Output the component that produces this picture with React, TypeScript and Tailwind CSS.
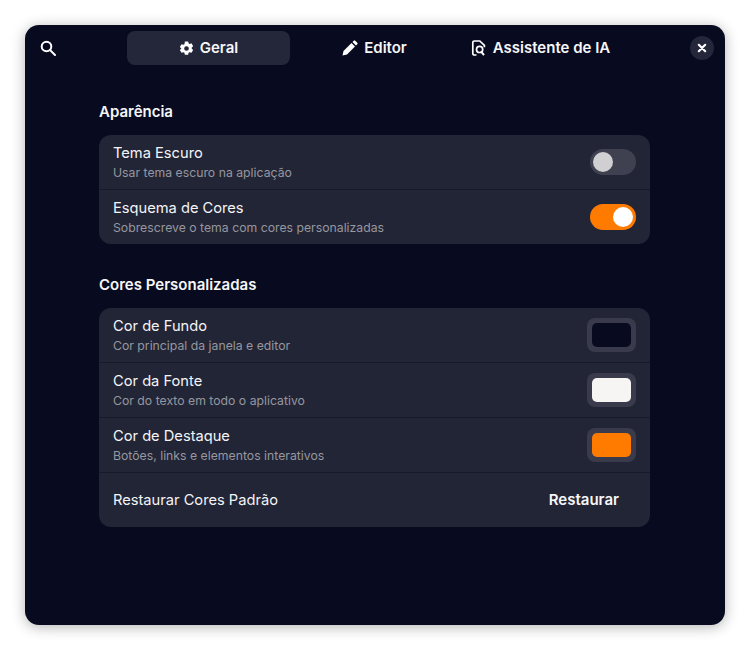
const tabs = ['Geral', 'Editor', 'Assistente de IA']

function SearchIcon() {
  return (
    <svg width="16" height="16" viewBox="0 0 16 16" fill="none" stroke="white" strokeWidth="2">
      <circle cx="6.5" cy="6.5" r="4.8" />
      <path d="M10 10l5 5" strokeLinecap="round" />
    </svg>
  )
}

function GearIcon() {
  return (
    <svg width="15" height="15" viewBox="0 0 16 16" fill="white">
      <path
        fillRule="evenodd"
        d="M6.2 0.4h3.6l.4 2 1.2.7 1.9-.7 1.8 3.1-1.5 1.3v1.4l1.5 1.3-1.8 3.1-1.9-.7-1.2.7-.4 2H6.2l-.4-2-1.2-.7-1.9.7-1.8-3.1 1.5-1.3V7.8L.9 6.5l1.8-3.1 1.9.7 1.2-.7.4-2zM8 5.5a2.5 2.5 0 1 0 0 5 2.5 2.5 0 0 0 0-5z"
      />
    </svg>
  )
}

function PencilIcon() {
  return (
    <svg width="16" height="16" viewBox="0 0 16 16" fill="white">
      <path d="M0.5 15.5l1-4.5 8-8 3.5 3.5-8 8-4.5 1zM10.5 2l1.3-1.3a1 1 0 0 1 1.4 0l2.1 2.1a1 1 0 0 1 0 1.4L14 5.5 10.5 2z" />
    </svg>
  )
}

function AssistantIcon() {
  return (
    <svg width="16" height="16" viewBox="0 0 16 16" fill="none" stroke="white" strokeWidth="1.7">
      <path d="M5.5 15H3.4A1.6 1.6 0 0 1 1.8 13.4V2.6A1.6 1.6 0 0 1 3.4 1h5.4l4.6 4.4v1.8" />
      <circle cx="8.6" cy="9.4" r="3.1" />
      <path d="M10 11.4l3 3.8" strokeWidth="2" />
    </svg>
  )
}

function CloseIcon() {
  return (
    <svg width="10" height="10" viewBox="0 0 10 10" fill="none" stroke="white" strokeWidth="2.2">
      <path d="M1.8 1.8l6.4 6.4M8.2 1.8l-6.4 6.4" strokeLinecap="round" />
    </svg>
  )
}

const tabIcons = [<GearIcon />, <PencilIcon />, <AssistantIcon />]

function Toggle({ on }: { on?: boolean }) {
  return (
    <div className={`flex h-[26px] w-[46px] items-center rounded-full p-[3px] ${on ? 'justify-end bg-[#ff7b00]' : 'justify-start bg-[#3f4150]'}`}>
      <div className={`size-5 rounded-full ${on ? 'bg-white' : 'bg-[#d0cfd2]'}`} />
    </div>
  )
}

function Swatch({ color }: { color: string }) {
  return (
    <div className="rounded-lg bg-[#393b4c] p-[5px]">
      <div className={`h-6 w-[39px] rounded-[5px] ${color}`} />
    </div>
  )
}

function Row({ title, desc, children }: { title: string; desc: string; children: React.ReactNode }) {
  return (
    <div className="flex h-[55px] items-center justify-between px-[14px] last:h-[54px]">
      <div>
        <p className="text-[14.67px] leading-[20px] text-[#f4f4f6]">{title}</p>
        <p className="mt-[2px] text-[12.25px] leading-[16px] text-[#96979f]">{desc}</p>
      </div>
      {children}
    </div>
  )
}

export default function App() {
  return (
    <div className="h-[650px] w-[750px] bg-white p-[25px] font-['Inter',sans-serif]">
      <div className="h-[600px] w-[700px] rounded-[14px] bg-[#080b20] shadow-[0_2px_14px_rgba(0,0,0,0.3)]">
        {/* Header */}
        <div className="flex items-center pl-[15px] pr-[11px] pt-[6px]">
          <div className="flex w-[24px] items-center">
            <SearchIcon />
          </div>
          <div className="ml-[63px] flex gap-[3px]">
            {tabs.map((tab, i) => (
              <div
                key={tab}
                className={`flex h-[34px] w-[163px] items-center justify-center gap-[6px] rounded-lg text-[15px] font-semibold text-[#f6f6f8] ${i === 0 ? 'bg-[#24263a]' : ''}`}
              >
                {tabIcons[i]}
                {tab}
              </div>
            ))}
          </div>
          <div className="ml-auto flex size-6 items-center justify-center rounded-full bg-[#24263a]">
            <CloseIcon />
          </div>
        </div>

        {/* Settings */}
        <div className="ml-[74px] w-[551px] pt-[37px]">
          <h2 className="text-[15px] font-semibold leading-[20px] text-[#f6f6f8]">Aparência</h2>
          <div className="mt-[13px] divide-y divide-[#181a2c] rounded-xl bg-[#222536]">
            <Row title="Tema Escuro" desc="Usar tema escuro na aplicação">
              <Toggle />
            </Row>
            <Row title="Esquema de Cores" desc="Sobrescreve o tema com cores personalizadas">
              <Toggle on />
            </Row>
          </div>

          <h2 className="mt-[31px] text-[15px] font-semibold leading-[20px] text-[#f6f6f8]">Cores Personalizadas</h2>
          <div className="mt-[13px] divide-y divide-[#181a2c] rounded-xl bg-[#222536]">
            <Row title="Cor de Fundo" desc="Cor principal da janela e editor">
              <Swatch color="bg-[#080b20]" />
            </Row>
            <Row title="Cor da Fonte" desc="Cor do texto em todo o aplicativo">
              <Swatch color="bg-[#f6f5f4]" />
            </Row>
            <Row title="Cor de Destaque" desc="Botões, links e elementos interativos">
              <Swatch color="bg-[#ff7b00]" />
            </Row>
            <div className="flex h-[54px] items-center justify-between pl-[14px] pr-[31px]">
              <p className="text-[14.67px] text-[#f4f4f6]">Restaurar Cores Padrão</p>
              <span className="text-[15px] font-semibold text-[#f6f6f8]">Restaurar</span>
            </div>
          </div>
        </div>
      </div>
    </div>
  )
}
